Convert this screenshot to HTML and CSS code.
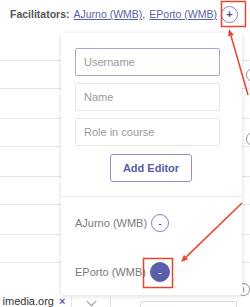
FILE: index.html
```html
<!DOCTYPE html>
<html>
<head>
  <title>Facilitators</title>
  <link rel="stylesheet" href="styles.css">
</head>
<body>
  <div class="page">
    <div class="facilitators">
      <span class="label">Facilitators:</span>
      <a href="#">AJurno (WMB)</a>,
      <a href="#">EPorto (WMB)</a>
      <span class="circle-btn plus">+</span>
    </div>

    <div class="rows">
      <div class="row row-first"></div>
      <div class="row"><span class="ring"></span></div>
      <div class="row row-tall"></div>
      <div class="row row-low"><span class="ring"></span></div>
      <div class="row row-tall"></div>
      <div class="row"></div>
      <div class="row row-tall"></div>
      <div class="row"></div>
    </div>

    <div class="footer-row">
      <div class="tag"><span class="tag-text">imedia.org</span><span class="tag-x">×</span></div>
      <div class="select"><span class="chevron"></span></div>
      <div class="field"></div>
      <span class="info">i</span>
    </div>

    <!-- popup for adding editors -->
    <div class="popover">
      <div class="editor-form">
        <input type="text" class="focused" placeholder="Username">
        <input type="text" placeholder="Name">
        <input type="text" placeholder="Role in course">
        <button type="button" class="add-btn">Add Editor</button>
      </div>
      <div class="editor-list">
        <div class="editor">AJurno (WMB) <span class="circle-btn">-</span></div>
        <div class="editor">EPorto (WMB) <span class="circle-btn filled">-</span></div>
      </div>
    </div>

    <!-- screenshot annotations -->
    <svg class="marks" width="250" height="307" viewBox="0 0 250 307">
      <rect x="221.5" y="1.5" width="24" height="25" fill="none" stroke="#e8442e" stroke-width="1.5"/>
      <rect x="143.5" y="258.5" width="29" height="29" fill="none" stroke="#e8442e" stroke-width="1.5"/>
      <line x1="248" y1="95" x2="231" y2="35.7" stroke="#e8442e" stroke-width="1.5"/>
      <polygon points="229,29 233.8,34.9 228.1,36.6" fill="#e8442e"/>
      <line x1="242" y1="203" x2="186" y2="257.1" stroke="#e8442e" stroke-width="1.5"/>
      <polygon points="181,262 188.1,259.3 183.9,255" fill="#e8442e"/>
    </svg>
  </div>
</body>
</html>
```

FILE: styles.css
```css
body {
  margin: 0;
  font-family: "Liberation Sans", Arial, sans-serif;
  font-size: 11px;
  background-color: #ffffff;
  overflow: hidden;
}

.page {
  position: relative;
  width: 250px;
  height: 307px;
  overflow: hidden;
}

.facilitators {
  display: flex;
  align-items: center;
  height: 28px;
  padding-left: 10px;
  color: #555;
  font-size: 10.5px;
  white-space: nowrap;
}

.facilitators .label {
  font-weight: bold;
  margin-right: 4px;
}

.facilitators a {
  color: #5b5fa5;
  text-decoration: underline;
}

.facilitators a + a {
  margin-left: 4px;
}

.circle-btn {
  display: inline-flex;
  align-items: center;
  justify-content: center;
  width: 18px;
  height: 18px;
  box-sizing: border-box;
  border: 1px solid #8185bb;
  border-radius: 50%;
  color: #4c4e8c;
  font-size: 11px;
  line-height: 1;
}

.circle-btn.plus {
  margin-left: 4px;
  width: 17px;
  height: 17px;
  font-weight: bold;
}

.circle-btn.filled {
  width: 20px;
  height: 20px;
  background-color: #5b5ea8;
  border-color: #5b5ea8;
  color: #ffffff;
}

.rows .row {
  height: 27px;
  border-bottom: 1px solid #e6e6e6;
  display: flex;
  align-items: center;
  justify-content: flex-end;
}

.rows .row-first {
  height: 32px;
}

.rows .row-tall {
  height: 29px;
}

.rows .row-low {
  align-items: flex-end;
}

.ring {
  width: 12px;
  height: 12px;
  margin-right: -10px;
  border: 1px solid #999;
  border-radius: 50%;
}

.footer-row {
  display: flex;
  align-items: flex-end;
  height: 44px;
}

.info {
  align-self: center;
  display: inline-flex;
  align-items: center;
  justify-content: center;
  width: 11px;
  height: 11px;
  margin: 9px 0 0 auto;
  border: 1px solid #999;
  border-radius: 50%;
  color: #777;
  font-size: 8px;
}

.tag {
  display: flex;
  justify-content: flex-end;
  width: 66px;
  overflow: hidden;
  white-space: nowrap;
  color: #333;
  line-height: 12px;
}

.tag-x {
  margin-left: 5px;
  color: #5b5fa5;
  font-weight: bold;
}

.select {
  width: 38px;
  height: 10px;
  margin-left: 6px;
  border-left: 1px solid #e4e4e4;
  border-right: 1px solid #e4e4e4;
  display: flex;
  justify-content: center;
}

.chevron {
  width: 6px;
  height: 6px;
  margin-top: 1px;
  border-right: 1px solid #999;
  border-bottom: 1px solid #999;
  transform: rotate(45deg);
}

.field {
  width: 96px;
  height: 5px;
  margin-left: 29px;
  border: 1px solid #dcdcdc;
  border-bottom: none;
  border-radius: 3px 0 0 0;
}

.popover {
  position: absolute;
  left: 61px;
  top: 33px;
  width: 181px;
  height: 262px;
  background-color: #ffffff;
  border-radius: 3px;
  box-shadow: 0 1px 5px rgba(0, 0, 0, 0.15);
}

.editor-form {
  display: flex;
  flex-direction: column;
  gap: 7px;
  padding: 15px 22px 0 14px;
}

.editor-form input {
  height: 28px;
  box-sizing: border-box;
  padding: 0 8px;
  border: 1px solid #e6e6e6;
  border-radius: 2px;
  font-family: "Liberation Sans", Arial, sans-serif;
  font-size: 11px;
  color: #333;
  outline: none;
}

.editor-form input::placeholder {
  color: #9a9a9a;
}

.editor-form input.focused {
  border-color: #a6a8cf;
}

.add-btn {
  align-self: flex-start;
  width: 82px;
  height: 28px;
  margin: 1px 0 0 35px;
  background-color: #ffffff;
  border: 1px solid #9092c5;
  border-radius: 3px;
  color: #5b5d9f;
  font-family: "Liberation Sans", Arial, sans-serif;
  font-size: 11px;
  font-weight: bold;
  cursor: pointer;
}

.editor-list {
  margin-top: 14px;
  border-top: 1px solid #ececec;
  padding: 16px 14px 0;
}

.editor {
  display: flex;
  align-items: center;
  gap: 4px;
  height: 20px;
  color: #7a7a7a;
}

.editor + .editor {
  margin-top: 29px;
}

.marks {
  position: absolute;
  left: 0;
  top: 0;
  pointer-events: none;
}
```
